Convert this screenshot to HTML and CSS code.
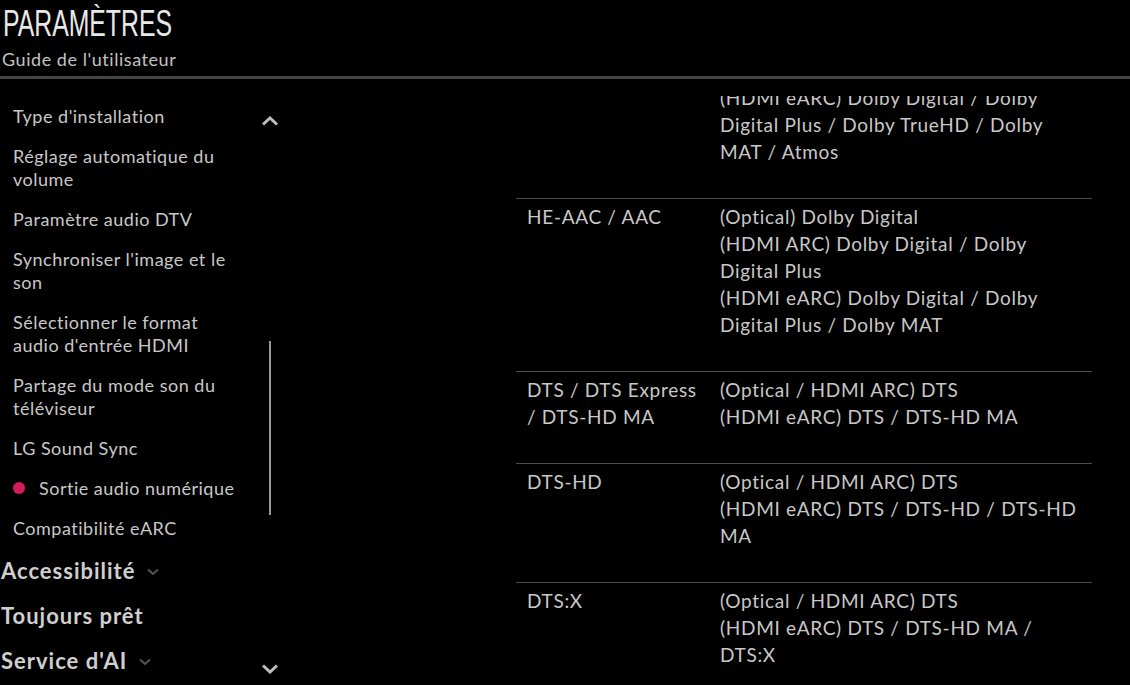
FILE: index.html
```html
<!DOCTYPE html>
<html lang="fr">
<head>
<meta charset="utf-8">
<title>Paramètres</title>
<link rel="stylesheet" href="styles.css">
</head>
<body>
<header class="head">
  <h1 class="title"><span class="title-text">PARAMÈTRES</span></h1>
  <p class="subtitle">Guide de l'utilisateur</p>
</header>
<main class="main">
  <nav class="side">
    <ul class="sublist">
      <li class="item">Type d'installation</li>
      <li class="item">Réglage automatique du volume</li>
      <li class="item">Paramètre audio DTV</li>
      <li class="item">Synchroniser l'image et le son</li>
      <li class="item">Sélectionner le format audio d'entrée HDMI</li>
      <li class="item">Partage du mode son du téléviseur</li>
      <li class="item">LG Sound Sync</li>
      <li class="item active"><span class="dot"></span>Sortie audio numérique</li>
      <li class="item">Compatibilité eARC</li>
      <li class="top">Accessibilité <svg class="mini" viewBox="0 0 12 8" width="12" height="8"><path d="M1 1.5 L6 6 L11 1.5" fill="none" stroke="#555" stroke-width="2"/></svg></li>
      <li class="top">Toujours prêt</li>
      <li class="top">Service d'AI <svg class="mini" viewBox="0 0 12 8" width="12" height="8"><path d="M1 1.5 L6 6 L11 1.5" fill="none" stroke="#555" stroke-width="2"/></svg></li>
    </ul>
    <div class="scroll">
      <svg class="chev" viewBox="0 0 18 10" width="18" height="10"><path d="M2 8.5 L9 2 L16 8.5" fill="none" stroke="#bdbdbd" stroke-width="3"/></svg>
      <div class="track"></div>
      <svg class="chev" viewBox="0 0 18 10" width="18" height="10"><path d="M2 1.5 L9 8 L16 1.5" fill="none" stroke="#bdbdbd" stroke-width="3"/></svg>
    </div>
  </nav>
  <section class="content">
    <div class="table">
      <div class="row first">
        <div class="c1"></div>
        <div class="c2">(HDMI eARC) Dolby Digital / Dolby Digital Plus / Dolby TrueHD / Dolby MAT / Atmos</div>
      </div>
      <div class="row">
        <div class="c1">HE-AAC / AAC</div>
        <div class="c2">(Optical) Dolby Digital<br>(HDMI ARC) Dolby Digital / Dolby Digital Plus<br>(HDMI eARC) Dolby Digital / Dolby Digital Plus / Dolby MAT</div>
      </div>
      <div class="row">
        <div class="c1">DTS / DTS Express / DTS-HD MA</div>
        <div class="c2">(Optical / HDMI ARC) DTS<br>(HDMI eARC) DTS / DTS-HD MA</div>
      </div>
      <div class="row">
        <div class="c1">DTS-HD</div>
        <div class="c2">(Optical / HDMI ARC) DTS<br>(HDMI eARC) DTS / DTS-HD / DTS-HD MA</div>
      </div>
      <div class="row">
        <div class="c1">DTS:X</div>
        <div class="c2">(Optical / HDMI ARC) DTS<br>(HDMI eARC) DTS / DTS-HD MA / DTS:X</div>
      </div>
    </div>
  </section>
</main>
</body>
</html>
```

FILE: styles.css
```css
* { box-sizing: border-box; }
html, body { margin: 0; padding: 0; background: #000; height: 100%; overflow: hidden; }
body { font-family: Lato, "Open Sans", sans-serif; color: #c8c8c8; width: 1130px; height: 685px; }

.head { height: 96px; padding-top: 2px; }
.title { margin: 0; font-weight: 400; font-size: 37px; line-height: 44px; height: 44px; color: #e8e8e8; font-family: "Liberation Sans", sans-serif; }
.title-text { display: inline-block; transform: scaleX(0.67); transform-origin: 3px 0; padding-left: 3px; }
.subtitle { margin: 1px 0 0 2px; font-size: 18px; line-height: 24px; color: #c2c2c2; letter-spacing: 0.55px; }
.head::after { content: ""; display: block; height: 3px; background: #444; margin-top: 5px; }

.main { display: flex; height: 589px; }
.side { width: 300px; flex: none; display: flex; }
.sublist { list-style: none; margin: 0; padding: 0; width: 255px; }
.item { padding: 8.5px 0 8.5px 13px; font-size: 18px; line-height: 23px; width: 245px; letter-spacing: 0.5px; }
.item.active { display: flex; align-items: center; }
.dot { width: 12px; height: 12px; border-radius: 50%; background: #d8195c; margin-right: 14px; flex: none; }
.top { font-weight: 700; font-size: 22px; line-height: 24px; padding: 10.5px 0 10.5px 1px; color: #cfcfcf; display: flex; align-items: center; gap: 12px; letter-spacing: 1px; }
.mini { margin-top: 2px; }

.scroll { width: 30px; display: flex; flex-direction: column; align-items: center; padding-top: 20px; }
.chev { flex: none; }
.track { width: 2px; height: 174px; background: #9a9a9a; margin: 215px 0 149px; }

.content { flex: none; width: 576px; margin-left: 216px; overflow: hidden; }
.table { margin-top: -16px; }
.row { display: flex; border-bottom: 1px solid #4c4c4c; padding: 4px 0 33px 11px; font-size: 19px; line-height: 27px; letter-spacing: 0.7px; }
.c1 { width: 193px; flex: none; padding-right: 22px; }
.c2 { flex: 1; padding-right: 14px; }
```
